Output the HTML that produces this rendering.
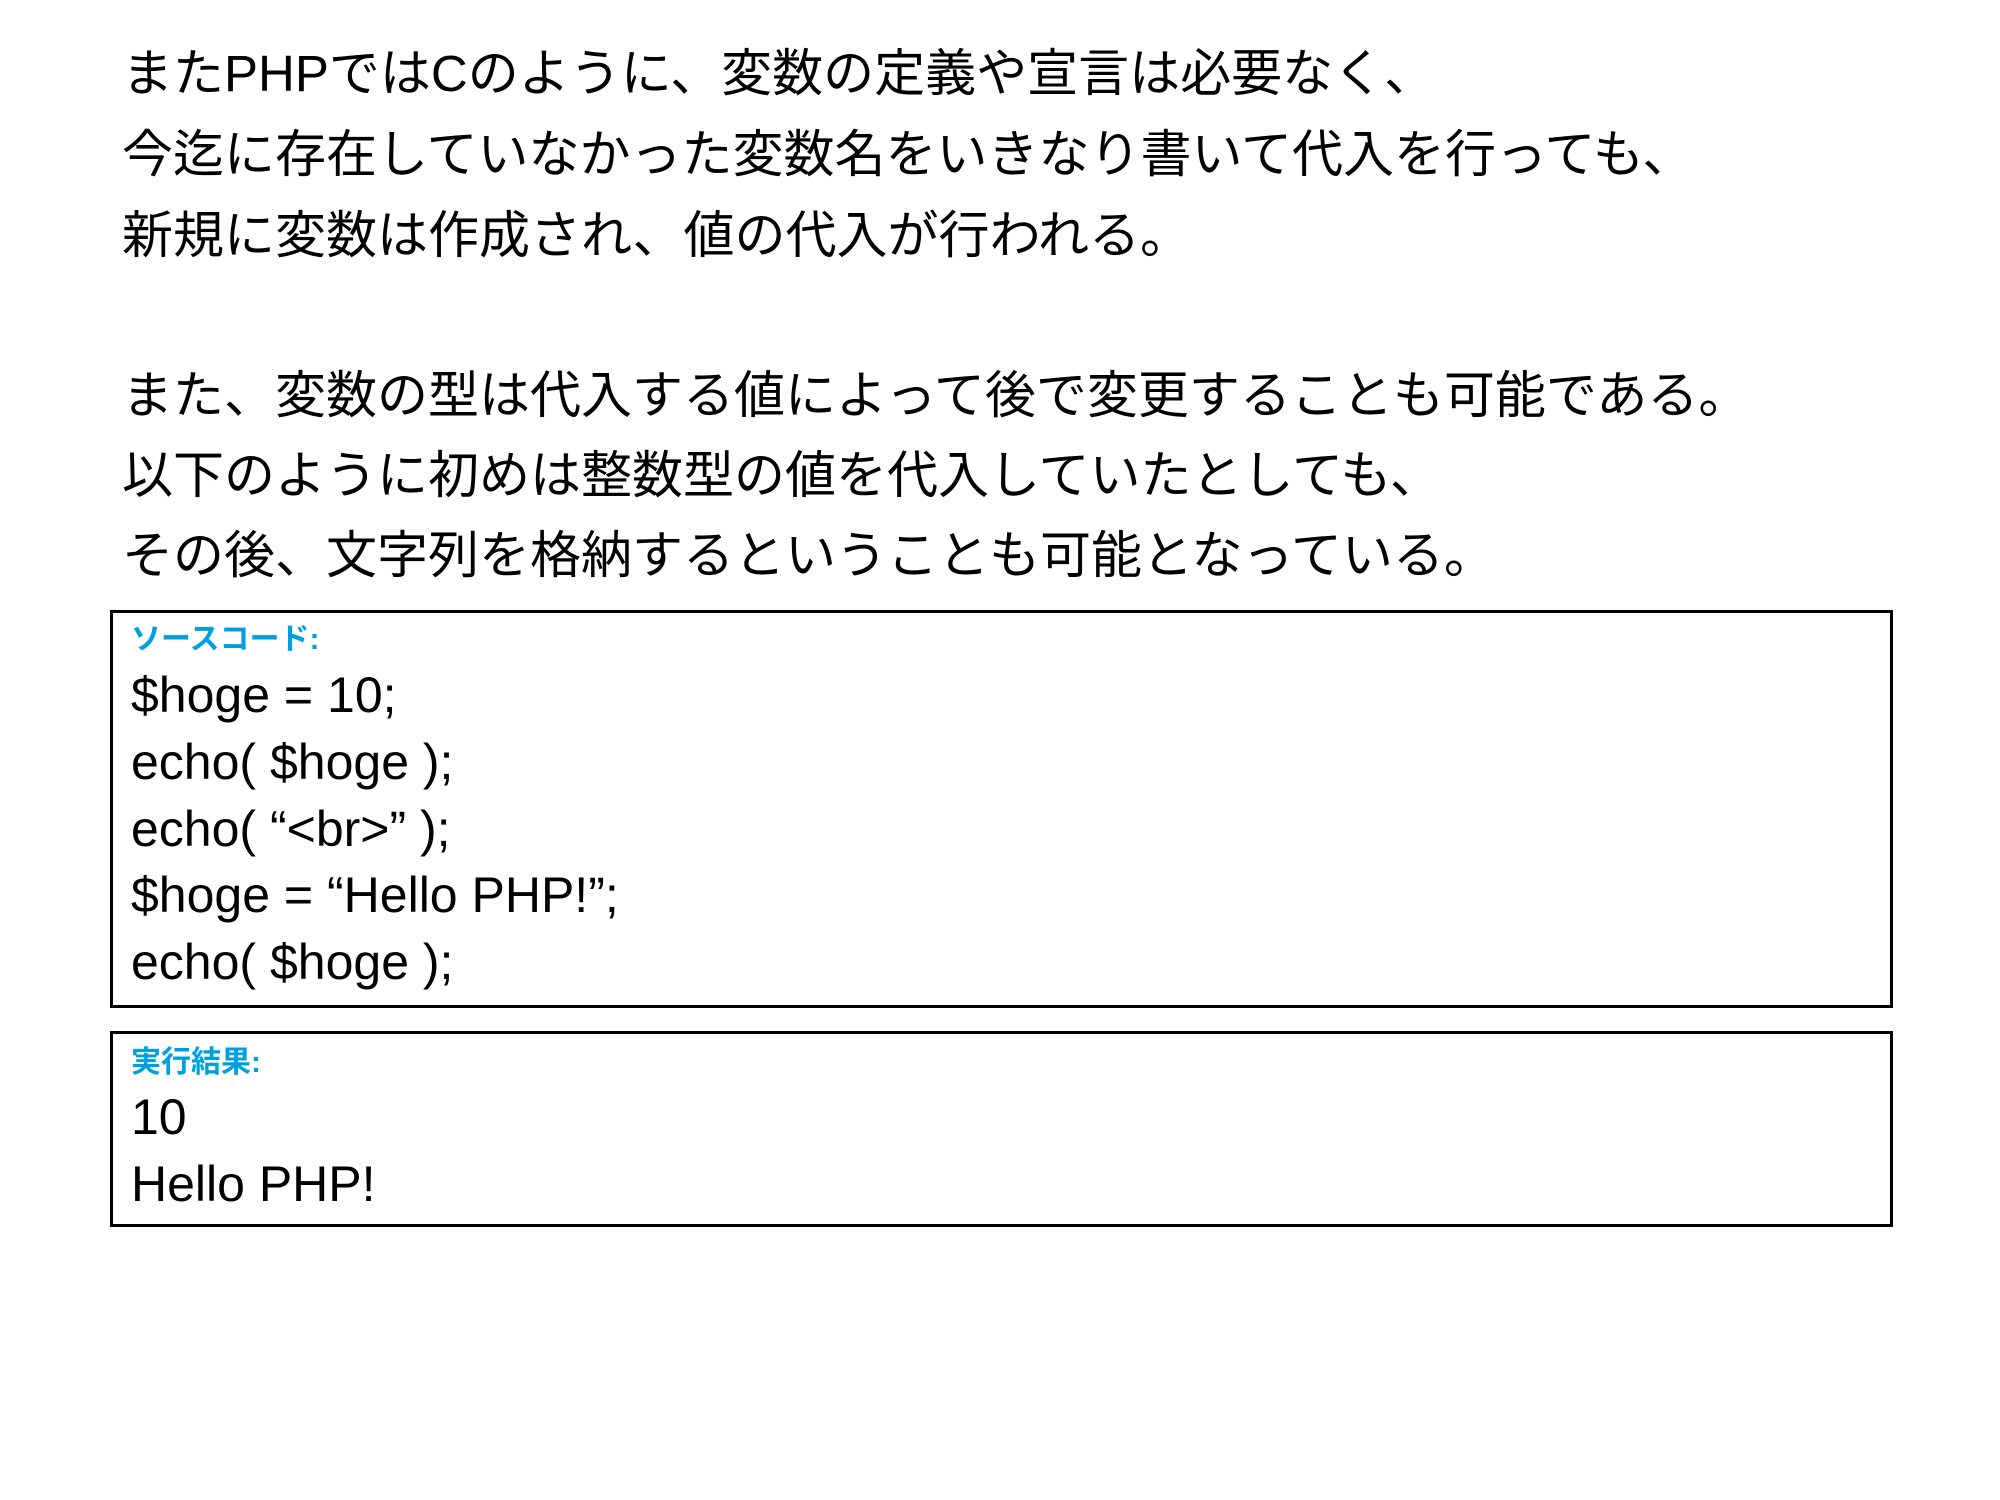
<!DOCTYPE html>
<html><head><meta charset="utf-8"><style>
html,body{margin:0;padding:0;background:#fff;width:2000px;height:1500px;overflow:hidden;position:relative}
.t{position:absolute;left:122px;font-family:"Liberation Sans","Noto Sans CJK JP",sans-serif;font-size:51px;line-height:1;white-space:nowrap;color:#000}
.box{position:absolute;left:110px;width:1777px;border:3px solid #000;box-sizing:content-box}
.l{position:absolute;left:131px;font-family:"Liberation Sans","Noto Sans CJK JP",sans-serif;white-space:nowrap;line-height:1}
.lab{font-size:30px;color:#00a0e0;font-weight:bold}
.c{font-size:50px;color:#000}
</style></head><body>
<div class="t" style="top:48px">またPHPではCのように、変数の定義や宣言は必要なく、</div>
<div class="t" style="top:129px">今迄に存在していなかった変数名をいきなり書いて代入を行っても、</div>
<div class="t" style="top:210px">新規に変数は作成され、値の代入が行われる。</div>
<div class="t" style="top:370px">また、変数の型は代入する値によって後で変更することも可能である。</div>
<div class="t" style="top:450px">以下のように初めは整数型の値を代入していたとしても、</div>
<div class="t" style="top:530px">その後、文字列を格納するということも可能となっている。</div>
<div class="box" style="top:610px;height:392px"></div>
<div class="box" style="top:1031px;height:190px"></div>
<div class="l lab" style="top:625px">ソースコード:</div>
<div class="l c" style="top:670px">$hoge = 10;</div>
<div class="l c" style="top:737px">echo( $hoge );</div>
<div class="l c" style="top:804px">echo( “&lt;br&gt;” );</div>
<div class="l c" style="top:870px">$hoge = “Hello PHP!”;</div>
<div class="l c" style="top:937px">echo( $hoge );</div>
<div class="l lab" style="top:1048px">実行結果:</div>
<div class="l c" style="top:1092px">10</div>
<div class="l c" style="top:1159px">Hello PHP!</div>
</body></html>
